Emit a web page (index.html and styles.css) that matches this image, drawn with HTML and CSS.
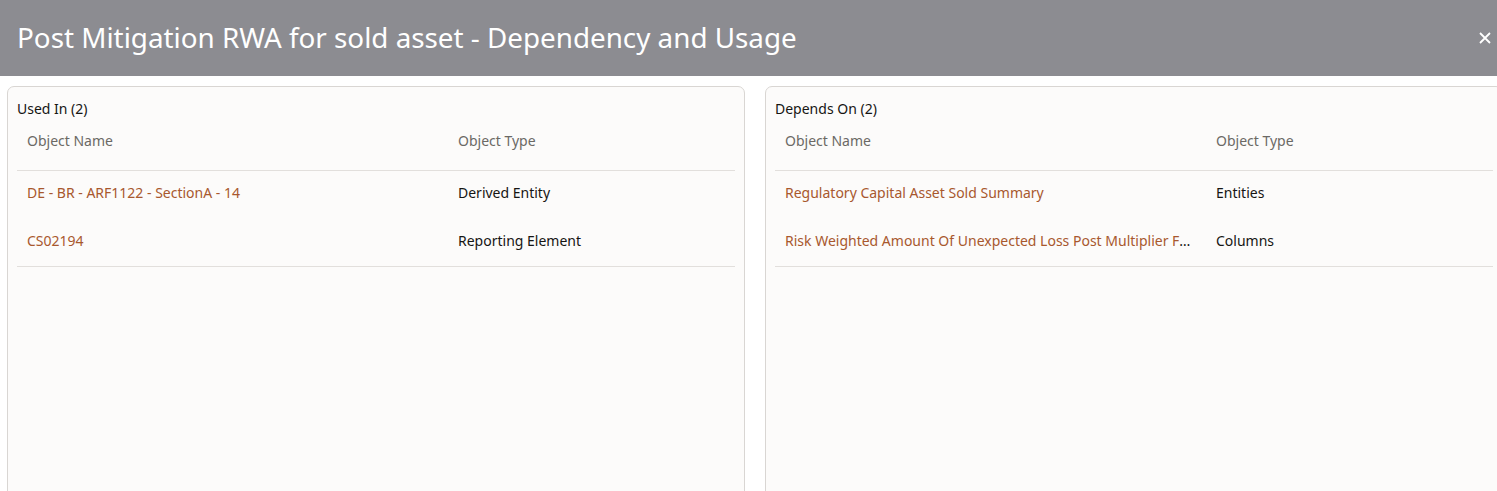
FILE: index.html
```html
<!DOCTYPE html>
<html lang="en">
<head>
    <meta charset="UTF-8">
    <meta name="viewport" content="width=device-width, initial-scale=1.0">
    <title>Dependency and Usage</title>
    <link rel="stylesheet" href="styles.css">
</head>
<body>
    <div class="dialog">
        <div class="dialog-header">
            <h1>Post Mitigation RWA for sold asset - Dependency and Usage</h1>
            <button class="close" aria-label="Close">
                <svg width="12" height="12" viewBox="0 0 12 12"><path d="M1 1L11 11M11 1L1 11" stroke="#fff" stroke-width="1.8" fill="none"/></svg>
            </button>
        </div>

        <div class="dialog-body">
            <div class="panel">
                <div class="panel-title">Used In (2)</div>
                <table>
                    <thead>
                        <tr><th class="col-name">Object Name</th><th>Object Type</th></tr>
                    </thead>
                    <tbody>
                        <tr><td class="col-name"><a href="#">DE - BR - ARF1122 - SectionA - 14</a></td><td>Derived Entity</td></tr>
                        <tr><td class="col-name"><a href="#">CS02194</a></td><td>Reporting Element</td></tr>
                    </tbody>
                </table>
            </div>

            <div class="panel">
                <div class="panel-title">Depends On (2)</div>
                <table>
                    <thead>
                        <tr><th class="col-name">Object Name</th><th>Object Type</th></tr>
                    </thead>
                    <tbody>
                        <tr><td class="col-name"><a href="#">Regulatory Capital Asset Sold Summary</a></td><td>Entities</td></tr>
                        <tr><td class="col-name"><a href="#">Risk Weighted Amount Of Unexpected Loss Post Multiplier For Sold Asset</a></td><td>Columns</td></tr>
                    </tbody>
                </table>
            </div>
        </div>
    </div>
</body>
</html>
```

FILE: styles.css
```css
* {
    margin: 0;
    padding: 0;
    box-sizing: border-box;
}

body {
    font-family: 'Noto Sans', 'Open Sans', sans-serif;
    background: #fff;
    color: #161513;
    overflow: hidden;
}

.dialog {
    width: 1503px;
}

.dialog-header {
    height: 76px;
    background: #8c8c91;
    display: flex;
    align-items: center;
    justify-content: space-between;
    padding: 0 6px 0 17px;
}

h1 {
    color: #fff;
    font-size: 27.8px;
    font-weight: 400;
    margin-top: -3px;
}

.close {
    background: none;
    border: none;
    width: 24px;
    height: 24px;
    display: flex;
    align-items: center;
    justify-content: center;
    cursor: pointer;
}

.dialog-body {
    display: flex;
    gap: 20px;
    padding: 10px 0 0 7px;
}

.panel {
    width: 738px;
    flex: none;
    height: 420px;
    background: #fcfbfa;
    border: 1px solid #d9d6d3;
    border-radius: 7px;
    padding: 13px 9px 0 9px;
}

.panel-title {
    font-size: 14px;
    line-height: 18px;
    margin-bottom: 3px;
}

table {
    width: 100%;
    border-collapse: collapse;
    table-layout: fixed;
    font-size: 14px;
}

th {
    text-align: left;
    font-weight: 400;
    color: #6b6965;
    height: 49px;
    padding: 0 10px 9px;
    border-bottom: 1px solid #e2dfdc;
}

.col-name {
    width: 431px;
}

td {
    height: 46px;
    padding: 0 10px 2px;
    white-space: nowrap;
    overflow: hidden;
    text-overflow: ellipsis;
    color: #161513;
}

tbody tr:last-child td {
    height: 50px;
    padding: 0 10px;
    border-bottom: 1px solid #e2dfdc;
}

a {
    color: #a8582e;
    text-decoration: none;
}
```
